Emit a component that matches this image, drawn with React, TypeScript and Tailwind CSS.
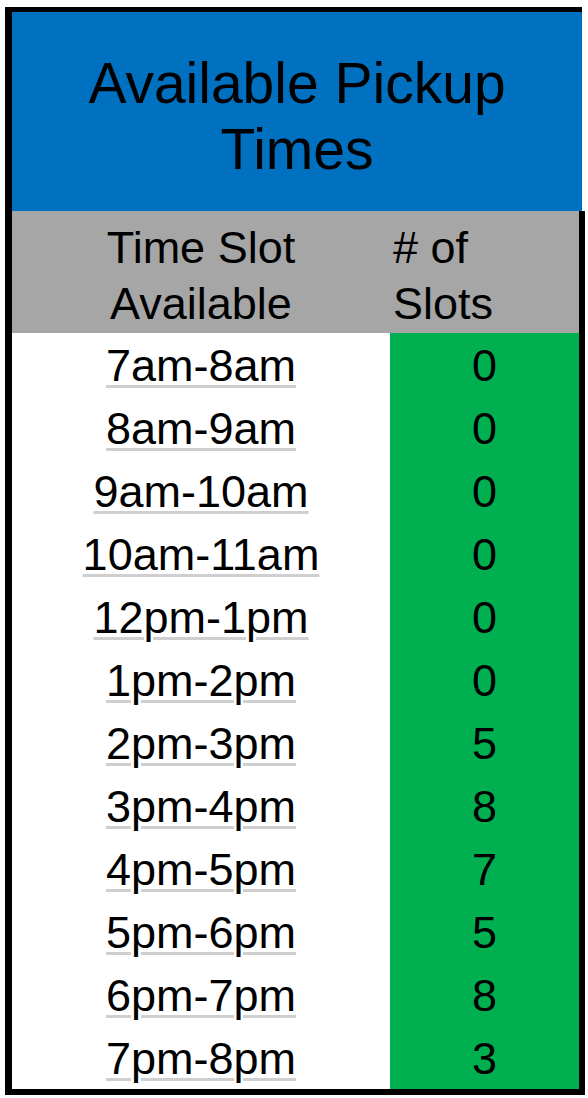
const slots: { time: string; count: number }[] = [
  { time: '7am-8am', count: 0 },
  { time: '8am-9am', count: 0 },
  { time: '9am-10am', count: 0 },
  { time: '10am-11am', count: 0 },
  { time: '12pm-1pm', count: 0 },
  { time: '1pm-2pm', count: 0 },
  { time: '2pm-3pm', count: 5 },
  { time: '3pm-4pm', count: 8 },
  { time: '4pm-5pm', count: 7 },
  { time: '5pm-6pm', count: 5 },
  { time: '6pm-7pm', count: 8 },
  { time: '7pm-8pm', count: 3 },
];

export default function App() {
  return (
    <div className="pl-[5px] pt-[7px] bg-white min-h-screen font-['Liberation_Sans',Arial,sans-serif] text-black">
      <div className="w-fit border-l-[7px] border-black">
        {/* Title */}
        <div className="w-[570px] h-[204px] border-t-[5px] border-black bg-[#0070C0] flex items-center justify-center text-center pt-[8px]">
          <h1 className="text-[57px] leading-[66px] font-normal">
            Available Pickup
            <br />
            Times
          </h1>
        </div>

        <div className="w-[573px] border-r-[6px] border-b-[6px] border-black">
          {/* Column headers */}
          <div className="flex bg-[#A6A6A6] h-[122px] pt-[9px] text-[45px] leading-[56px]">
            <div className="w-[378px] text-center">
              Time Slot
              <br />
              Available
            </div>
            <div className="flex-1 pl-[3px]">
              # of
              <br />
              Slots
            </div>
          </div>

          {/* Rows */}
          {slots.map((s) => (
            <div key={s.time} className="flex h-[63px] text-[45px] leading-[63px]">
              <div className="w-[378px] bg-white text-center pt-[1px]">
                <span className="underline decoration-[#cfcfcf] decoration-[3px] underline-offset-[4px]">
                  {s.time}
                </span>
              </div>
              <div className="flex-1 bg-[#00B050] text-center pt-[1px]">{s.count}</div>
            </div>
          ))}
        </div>
      </div>
    </div>
  );
}
